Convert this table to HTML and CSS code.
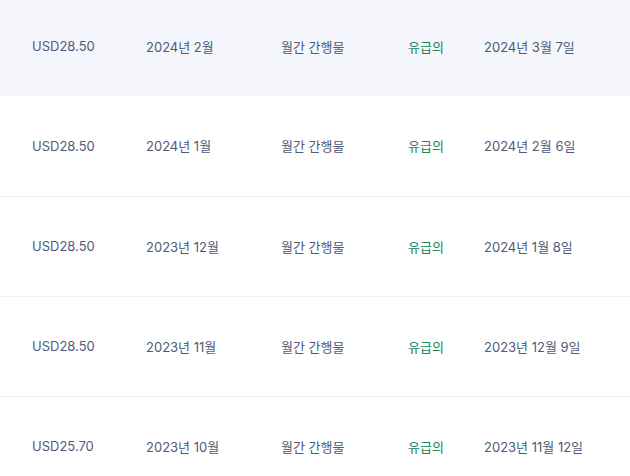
FILE: index.html
```html
<!DOCTYPE html>
<html lang="ko">
<head>
  <meta charset="UTF-8">
  <title>결제 내역</title>
  <link rel="stylesheet" href="styles.css">
</head>
<body>
  <table class="billing">
    <colgroup>
      <col class="c-amount">
      <col class="c-period">
      <col class="c-type">
      <col class="c-status">
      <col class="c-date">
    </colgroup>
    <tbody>
      <tr class="active">
        <td class="amount">USD28.50</td>
        <td>2024년 2월</td>
        <td>월간 간행물</td>
        <td class="status">유급의</td>
        <td>2024년 3월 7일</td>
      </tr>
      <tr>
        <td class="amount">USD28.50</td>
        <td>2024년 1월</td>
        <td>월간 간행물</td>
        <td class="status">유급의</td>
        <td>2024년 2월 6일</td>
      </tr>
      <tr>
        <td class="amount">USD28.50</td>
        <td>2023년 12월</td>
        <td>월간 간행물</td>
        <td class="status">유급의</td>
        <td>2024년 1월 8일</td>
      </tr>
      <tr>
        <td class="amount">USD28.50</td>
        <td>2023년 11월</td>
        <td>월간 간행물</td>
        <td class="status">유급의</td>
        <td>2023년 12월 9일</td>
      </tr>
      <tr>
        <td class="amount">USD25.70</td>
        <td>2023년 10월</td>
        <td>월간 간행물</td>
        <td class="status">유급의</td>
        <td>2023년 11월 12일</td>
      </tr>
    </tbody>
  </table>
</body>
</html>
```

FILE: styles.css
```css
body {
  font-family: Inter, "Noto Sans CJK KR", sans-serif;
  background: #ffffff;
  margin: 0;
  padding: 0;
  overflow: hidden;
}
.billing {
  width: 100%;
  table-layout: fixed;
  border-collapse: collapse;
  margin-top: -4px;
  font-size: 13px;
  color: #4f5a78;
}
.c-amount { width: 146px; }
.c-period { width: 135px; }
.c-type { width: 127px; }
.c-status { width: 76px; }
.billing tr {
  height: 100px;
  border-bottom: 1px solid #f1f1f4;
}
.billing tr.active {
  background: #f4f6fb;
  border-bottom: none;
}
.billing td {
  padding: 0;
  white-space: nowrap;
  vertical-align: middle;
}
.billing .amount {
  padding-left: 32px;
}
.billing .status {
  color: #17865a;
}
```
